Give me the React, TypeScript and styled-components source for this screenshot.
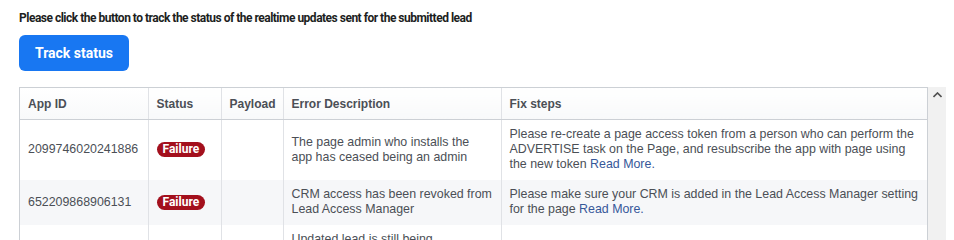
import React from "react";
import styled, { createGlobalStyle } from "styled-components";

const Global = createGlobalStyle`
  html, body { margin: 0; padding: 0; background: #fff; }
  body { font-family: "Liberation Sans", Arial, sans-serif; overflow: hidden; }
`;

const Page = styled.div`
  padding: 11px 0 0 19px;
  width: 954px;
  box-sizing: border-box;
`;

const Heading = styled.div`
  font-family: Roboto, "Liberation Sans", Arial, sans-serif;
  font-weight: 700;
  font-size: 12px;
  letter-spacing: -0.5px;
  line-height: 15px;
  color: #1c1e21;
`;

const TrackButton = styled.button`
  margin-top: 9px;
  width: 110px;
  height: 36px;
  border: none;
  border-radius: 6px;
  background: #1877f2;
  color: #fff;
  font-family: Roboto, "Liberation Sans", Arial, sans-serif;
  font-weight: 700;
  font-size: 14px;
  padding: 0;
  cursor: pointer;
  display: block;
`;

const Frame = styled.div`
  margin-top: 16px;
  width: 927px;
  height: 160px;
  display: flex;
`;

const TableArea = styled.div`
  flex: 1;
  border: 1px solid #ccd0d5;
  border-bottom: none;
  overflow: hidden;
`;

const ScrollTrack = styled.div`
  width: 18px;
  background: #f1f1f1;
  display: flex;
  justify-content: center;
  padding-top: 5px;
  box-sizing: border-box;
`;

const Table = styled.table`
  width: 100%;
  table-layout: fixed;
  border-collapse: collapse;
  font-size: 12.4px;
  color: #4b4f56;
`;

const HeadCell = styled.th`
  height: 31px;
  padding: 0 8px;
  text-align: left;
  font-weight: 700;
  font-size: 12px;
  color: #4b4f56;
  background: linear-gradient(#ffffff, #f8f9fa);
  border-bottom: 1px solid #ccd0d5;
  border-left: 1px solid #e0e2e6;
  &:first-child { border-left: none; }
`;

const Row = styled.tr<{ $shaded?: boolean }>`
  background: ${(p) => (p.$shaded ? "#f6f7f9" : "#ffffff")};
`;

const Cell = styled.td`
  padding: 7px 8px 8px;
  line-height: 15px;
  vertical-align: middle;
  border-left: 1px solid #e0e2e6;
  &:first-child { border-left: none; }
`;

const Badge = styled.span`
  display: inline-block;
  background: #a3101d;
  color: #fff;
  font-family: Roboto, "Liberation Sans", Arial, sans-serif;
  font-weight: 700;
  font-size: 12px;
  line-height: 15px;
  padding: 0 6px;
  border-radius: 8px;
`;

const Link = styled.a`
  color: #365899;
  text-decoration: none;
`;

const rows = [
  {
    id: "2099746020241886",
    desc: "The page admin who installs the app has ceased being an admin",
    fix: "Please re-create a page access token from a person who can perform the ADVERTISE task on the Page, and resubscribe the app with page using the new token ",
  },
  {
    id: "652209868906131",
    desc: "CRM access has been revoked from Lead Access Manager",
    fix: "Please make sure your CRM is added in the Lead Access Manager setting for the page ",
  },
  {
    id: "652209868906131",
    desc: "Updated lead is still being processed by the system",
    fix: "",
  },
];

export default function App() {
  return (
    <Page>
      <Global />
      <Heading>
        Please click the button to track the status of the realtime updates sent for the submitted lead
      </Heading>
      <TrackButton>Track status</TrackButton>
      <Frame>
        <TableArea>
          <Table>
            <colgroup>
              <col style={{ width: 128 }} />
              <col style={{ width: 73 }} />
              <col style={{ width: 62 }} />
              <col style={{ width: 218 }} />
              <col />
            </colgroup>
            <thead>
              <tr>
                <HeadCell>App ID</HeadCell>
                <HeadCell>Status</HeadCell>
                <HeadCell>Payload</HeadCell>
                <HeadCell>Error Description</HeadCell>
                <HeadCell>Fix steps</HeadCell>
              </tr>
            </thead>
            <tbody>
              {rows.map((r, i) => (
                <Row key={i} $shaded={i % 2 === 1}>
                  <Cell>{r.id}</Cell>
                  <Cell>
                    <Badge>Failure</Badge>
                  </Cell>
                  <Cell />
                  <Cell>{r.desc}</Cell>
                  <Cell>
                    {r.fix}
                    {r.fix && <Link href="#">Read More.</Link>}
                  </Cell>
                </Row>
              ))}
            </tbody>
          </Table>
        </TableArea>
        <ScrollTrack>
          <svg width="9" height="6" viewBox="0 0 9 6">
            <path d="M0.5 5 L4.5 1 L8.5 5" fill="none" stroke="#505050" strokeWidth="1.6" />
          </svg>
        </ScrollTrack>
      </Frame>
    </Page>
  );
}
